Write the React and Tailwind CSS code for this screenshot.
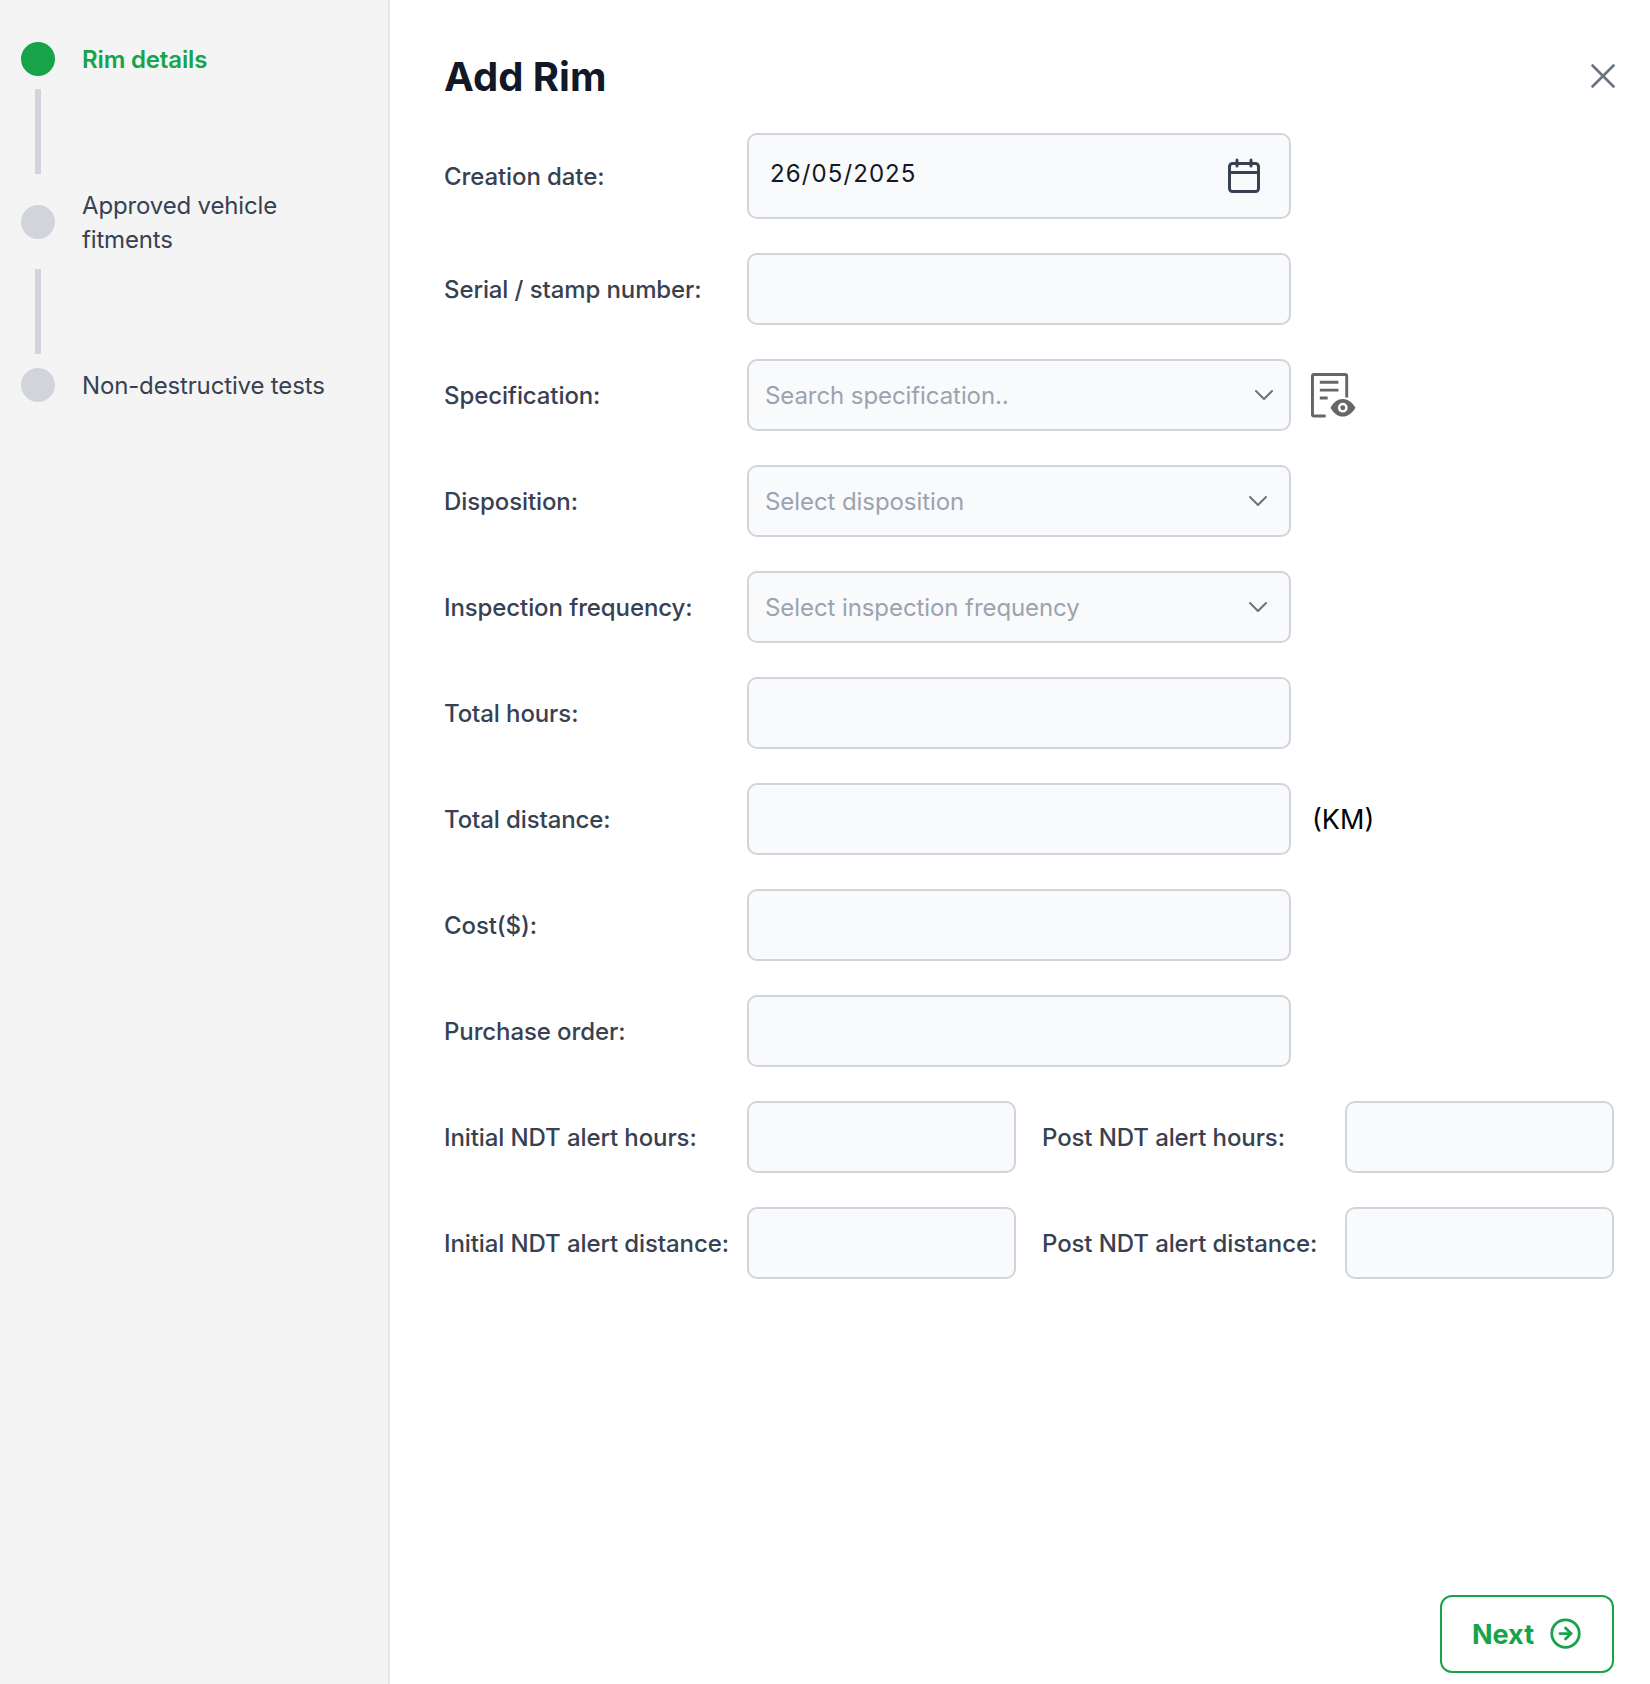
import React from 'react'
import { X, CircleArrowRight } from 'lucide-react'

const STEPS = [
  { label: 'Rim details', active: true },
  { label: 'Approved vehicle fitments' },
  { label: 'Non-destructive tests' },
]

const BOX = 'rounded-[10px] border-2 border-[#d1d5db] bg-[#f9fafb]'

function Chevron({ className = '' }) {
  return (
    <svg width="20" height="12" viewBox="0 0 20 12" fill="none" className={className}>
      <path d="M2 2l8 8 8-8" stroke="#6b7280" strokeWidth="2" strokeLinecap="round" strokeLinejoin="round" />
    </svg>
  )
}

function CalendarIcon() {
  return (
    <svg width="34" height="36" viewBox="0 0 34 36" fill="none" stroke="#374151" strokeWidth="3" strokeLinecap="round" strokeLinejoin="round">
      <rect x="2.5" y="5.5" width="29" height="28" rx="3" />
      <path d="M2.5 14.5h29M10 2v6M24 2v6" />
    </svg>
  )
}

function SpecIcon() {
  return (
    <svg width="45" height="45" viewBox="0 0 46 46" fill="none" className="shrink-0">
      <path d="M15 44H3a1.500 1.500 0 0 1-1.500-1.500V3A1.500 1.500 0 0 1 3 1.500h32A1.500 1.500 0 0 1 36.500 3v22" stroke="#666" strokeWidth="3" />
      <path d="M9 9.500h19M9 17.500h19M9 25.500h8" stroke="#666" strokeWidth="3" />
      <path fillRule="evenodd" clipRule="evenodd" fill="#666" d="M20 35.500c3-6 7.500-9 12.500-9s9.500 3 13 9c-3.500 6-8 9-13 9s-9.500-3-12.500-9zm12.500 5a5 5 0 1 0 0-10 5 5 0 0 0 0 10z" />
      <circle cx="32.500" cy="35.500" r="2.500" fill="#666" />
    </svg>
  )
}

function TextBox({ className = 'w-[544px]' }) {
  return <input type="text" className={`h-[72px] shrink-0 px-4 outline-none ${BOX} ${className}`} />
}

function Dropdown({ placeholder, chevronClass = 'mr-[21px]' }) {
  return (
    <div className={`flex h-[72px] w-[544px] shrink-0 items-center justify-between pl-[16px] ${BOX}`}>
      <span className="pt-[2px] text-[24px] tracking-[-0.08px] text-[#9ca3af]">{placeholder}</span>
      <Chevron className={chevronClass} />
    </div>
  )
}

function Label({ children, className = 'w-[303px]' }) {
  return <label className={`shrink-0 pt-[2px] text-[24px] font-medium tracking-[-0.1px] text-[#374151] ${className}`}>{children}</label>
}

function Row({ label, children }) {
  return (
    <div className="flex items-center">
      <Label>{label}</Label>
      {children}
    </div>
  )
}

function HalfRow({ left, right }) {
  return (
    <div className="flex items-center">
      <Label>{left}</Label>
      <TextBox className="w-[269px]" />
      <Label className="ml-[26px] w-[303px]">{right}</Label>
      <TextBox className="w-[269px]" />
    </div>
  )
}

function Stepper() {
  return (
    <aside className="flex w-[390px] shrink-0 flex-col border-r-2 border-[#e5e7eb] bg-[#f4f4f4] pl-[21px] pr-4 pt-[42px]">
      {STEPS.map((step, i) => (
        <div key={step.label}>
          <div className="flex items-center gap-[27px]">
            <span className={`h-[34px] w-[34px] shrink-0 rounded-full ${step.active ? 'bg-[#16a34a]' : 'bg-[#d1d5db]'}`} />
            <span className={`translate-y-[1px] text-[24px] leading-[34px] tracking-[-0.15px] ${step.active ? 'font-semibold text-[#16a34a]' : 'text-[#374151]'}`}>{step.label}</span>
          </div>
          {i < STEPS.length - 1 && <div className="mb-[14px] ml-[14px] mt-[13px] h-[85px] w-[6px] bg-[#d1d5db]" />}
        </div>
      ))}
    </aside>
  )
}

export default function App() {
  return (
    <div className="flex h-[1684px] w-[1650px] bg-white font-['Inter',sans-serif]">
      <Stepper />
      <main className="flex min-w-0 flex-1 flex-col pl-[54px] pr-[36px]">
        <div className="flex h-[133px] items-start justify-between">
          <h1 className="mt-[48px] text-[40px] font-bold leading-[58px] text-[#111827]">Add Rim</h1>
          <X size={42} strokeWidth={1.500} className="mt-[55px] -mr-[10px] text-[#6b7280]" />
        </div>

        <div className="flex flex-col gap-[34px]">
          <Row label="Creation date:">
            <div className={`flex h-[86px] w-[544px] shrink-0 items-center justify-between pl-[21px] pr-[28px] ${BOX}`}>
              <span className="-mt-[4px] text-[24px] tracking-[1.100px] text-[#111827]">26/05/2025</span>
              <CalendarIcon />
            </div>
          </Row>
          <Row label="Serial / stamp number:"><TextBox /></Row>
          <Row label="Specification:">
            <Dropdown placeholder="Search specification.." chevronClass="mr-[15px]" />
            <div className="ml-[20px]"><SpecIcon /></div>
          </Row>
          <Row label="Disposition:"><Dropdown placeholder="Select disposition" /></Row>
          <Row label="Inspection frequency:"><Dropdown placeholder="Select inspection frequency" /></Row>
          <Row label="Total hours:"><TextBox /></Row>
          <Row label="Total distance:">
            <TextBox />
            <span className="ml-[21px] pt-[2px] text-[27px] text-black">(KM)</span>
          </Row>
          <Row label="Cost($):"><TextBox /></Row>
          <Row label="Purchase order:"><TextBox /></Row>
          <HalfRow left="Initial NDT alert hours:" right="Post NDT alert hours:" />
          <HalfRow left="Initial NDT alert distance:" right="Post NDT alert distance:" />
        </div>

        <div className="mb-[11px] mt-auto flex justify-end">
          <button type="button" className="flex h-[78px] w-[174px] items-center justify-center gap-[15px] rounded-[12px] border-2 border-[#16a34a] text-[27px] font-bold text-[#16a34a]">
            <span className="pt-[2px]">Next</span>
            <CircleArrowRight size={33} strokeWidth={2} className="-mt-[1px]" />
          </button>
        </div>
      </main>
    </div>
  )
}
